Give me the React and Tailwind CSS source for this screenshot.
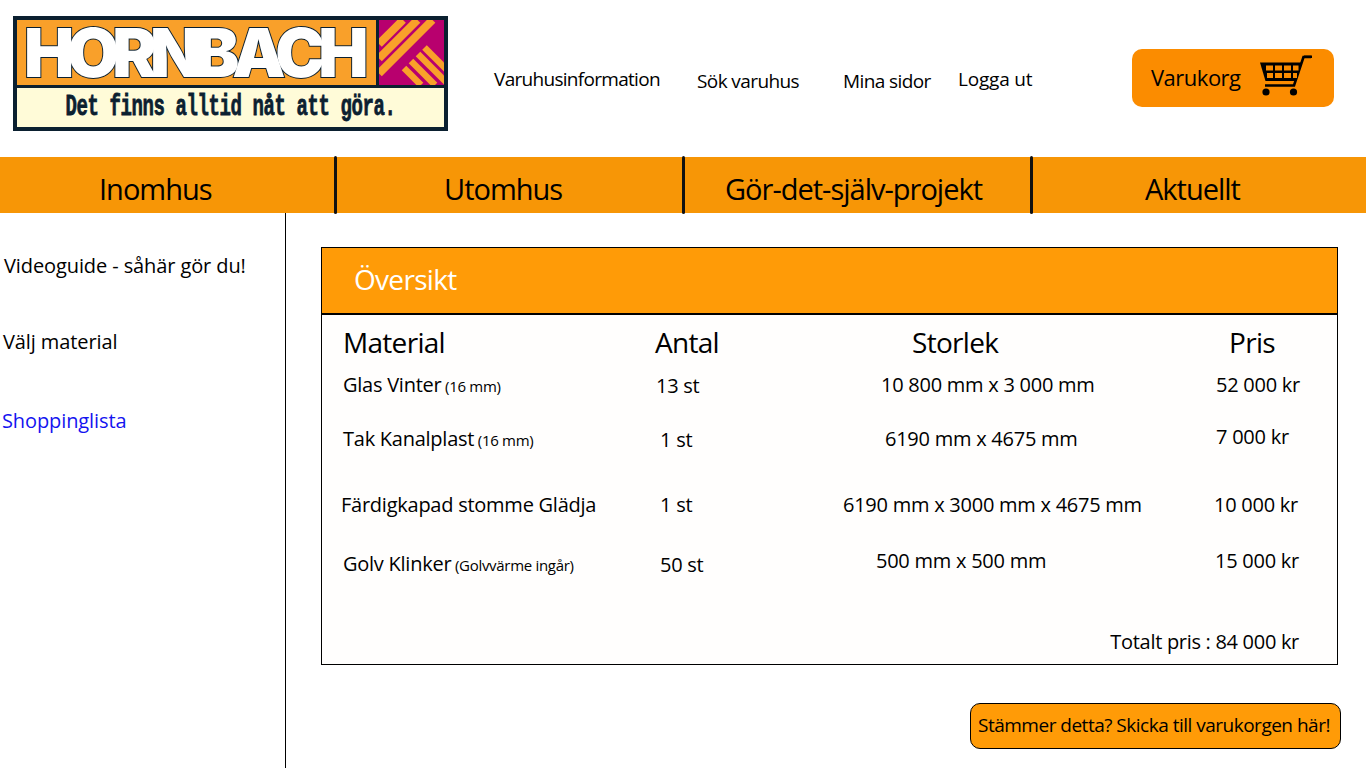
const navItems = [
  { label: 'Inomhus', className: 'w-[334px] pl-[99px]' },
  { label: 'Utomhus', className: 'w-[345px] pl-[107px]' },
  { label: 'Gör-det-själv-projekt', className: 'w-[345px] pl-[40px]' },
  { label: 'Aktuellt', className: 'flex-1 pl-[112px]' },
];

const headerLinks = [
  { label: 'Varuhusinformation', className: 'w-[203px] mt-[67px] tracking-[-0.7px]' },
  { label: 'Sök varuhus', className: 'w-[146px] mt-[69px] tracking-[-0.6px]' },
  { label: 'Mina sidor', className: 'w-[115px] mt-[69px] tracking-[-0.6px]' },
  { label: 'Logga ut', className: 'w-[174px] mt-[67px] tracking-[-0.2px]' },
];

const rows = [
  {
    height: 'h-[54px]',
    material: 'Glas Vinter',
    note: '(16 mm)',
    cells: ['pl-[21px]', 'pl-[16px] mt-[1px]', 'pl-[51px]', 'pl-[16px]'],
    antal: '13 st',
    storlek: '10 800 mm x 3 000 mm',
    pris: '52 000 kr',
  },
  {
    height: 'h-[66px]',
    material: 'Tak Kanalplast',
    note: '(16 mm)',
    cells: ['pl-[21px]', 'pl-[20px] mt-[1px]', 'pl-[55px]', 'pl-[16px] -mt-[2px]'],
    antal: '1 st',
    storlek: '6190 mm x 4675 mm',
    pris: '7 000 kr',
  },
  {
    height: 'h-[59px]',
    material: 'Färdigkapad stomme Glädja',
    cells: ['pl-[19px]', 'pl-[20px]', 'pl-[13px]', 'pl-[14px]'],
    antal: '1 st',
    storlek: '6190 mm x 3000 mm x 4675 mm',
    pris: '10 000 kr',
  },
  {
    height: 'h-[60px]',
    material: 'Golv Klinker',
    note: '(Golvvärme ingår)',
    cells: ['pl-[21px]', 'pl-[20px] mt-[1px]', 'pl-[46px] -mt-[3px]', 'pl-[15px] -mt-[3px]'],
    antal: '50 st',
    storlek: '500 mm x 500 mm',
    pris: '15 000 kr',
  },
];

const Logo = () => (
  <div className="w-[435px] h-[115px] mt-[16px] border-4 border-[#0b2030] flex flex-col">
    <div className="h-[65px] flex">
      <div className="flex-1 bg-[#f9a02a] border-r-[3px] border-[#0b2030] flex items-center pl-[7px]">
        <span className="font-['Inter',sans-serif] font-black text-[67px] leading-none tracking-[-7px] text-white [-webkit-text-stroke:2px_#0b2030] [paint-order:stroke_fill]">
          HORNBACH
        </span>
      </div>
      <svg viewBox="0 0 65 65" className="w-[65px] h-[65px]">
        <defs>
          <clipPath id="lowerRight">
            <polygon points="73,0 65,8 65,65 8,65" />
          </clipPath>
        </defs>
        <rect width="65" height="65" fill="#b8006e" />
        <g stroke="#f9a02a" strokeWidth="8">
          <line x1="24" y1="0" x2="0" y2="24" />
          <line x1="38.5" y1="0" x2="0" y2="38.5" />
          <line x1="53.5" y1="0" x2="0" y2="53.5" />
        </g>
        <g stroke="#f9a02a" strokeWidth="6.5" clipPath="url(#lowerRight)">
          <line x1="18" y1="0" x2="83" y2="65" />
          <line x1="5" y1="0" x2="70" y2="65" />
          <line x1="-9" y1="0" x2="56" y2="65" />
          <line x1="-23" y1="0" x2="42" y2="65" />
        </g>
      </svg>
    </div>
    <div className="flex-1 border-t-[3px] border-[#0b2030] bg-[#fffbd8] flex items-center justify-center">
      <span className="font-['Liberation_Mono',monospace] font-bold text-[19px] leading-none text-[#0b2030] scale-y-[1.6] tracking-[-0.4px] whitespace-nowrap [-webkit-text-stroke:0.5px_#0b2030]">
        Det finns alltid nåt att göra.
      </span>
    </div>
  </div>
);

const CartIcon = () => (
  <svg viewBox="0 0 70 52" className="w-[70px] h-[52px] mb-[4px]">
    <path d="M61 7H53.5L44 35.5H15" fill="none" stroke="#000" strokeWidth="2.6" />
    <path d="M10 12.5H52L45.5 31H15.5Z" fill="#000" />
    <g fill="#fb8c00">
      <rect x="16" y="15.5" width="7" height="5" />
      <rect x="25" y="15.5" width="7" height="5" />
      <rect x="34" y="15.5" width="7" height="5" />
      <rect x="43" y="15.5" width="5.5" height="5" />
      <rect x="17" y="23" width="6" height="5" />
      <rect x="25" y="23" width="7" height="5" />
      <rect x="34" y="23" width="7" height="5" />
      <rect x="43" y="23" width="4" height="5" />
    </g>
    <path d="M54 5.5H62V8H54Z" fill="#000" />
    <circle cx="16" cy="42" r="3.6" fill="#000" />
    <circle cx="43.5" cy="42" r="3.6" fill="#000" />
  </svg>
);

const App = () => {
  return (
    <div className="w-[1366px] h-[768px] overflow-hidden bg-white text-black font-['Open_Sans',sans-serif]">
      {/* Header */}
      <div className="h-[157px] flex pl-[13px]">
        <Logo />
        <div className="flex ml-[46px]">
          {headerLinks.map(link => (
            <a key={link.label} className={`${link.className} text-[19px] leading-[24px]`}>
              {link.label}
            </a>
          ))}
          <div className="w-[202px] h-[58px] mt-[49px] rounded-[10px] bg-[#fb8c00] flex items-center pl-[19px]">
            <span className="w-[99px] text-[22px] tracking-[-0.5px] -mt-[1px]">Varukorg</span>
            <CartIcon />
          </div>
        </div>
      </div>

      {/* Main nav */}
      <div className="h-[56px] bg-[#f79606] flex">
        {navItems.map((item, i) => (
          <div key={item.label} className="flex">
            <div className={`${item.className} pt-[12px] text-[29px] leading-[40px] tracking-[-1px] whitespace-nowrap`}>
              {item.label}
            </div>
            {i < 3 && <div className="w-[3px] h-[58px] -mt-[1px] rounded-full bg-[#111]"></div>}
          </div>
        ))}
      </div>

      <div className="flex h-[555px]">
        {/* Sidebar */}
        <div className="w-[286px] border-r border-black flex flex-col text-[20px] leading-[28px] tracking-[-0.1px]">
          <a className="mt-[39px] ml-[4px]">Videoguide - såhär gör du!</a>
          <a className="mt-[48px] ml-[3px]">Välj material</a>
          <a className="mt-[51px] ml-[2px] text-[#1414f0]">Shoppinglista</a>
        </div>

        {/* Overview */}
        <div className="flex-1 pl-[35px] pt-[34px]">
          <div className="w-[1017px] h-[418px] border border-black bg-[#fffefd] flex flex-col">
            <div className="h-[67px] shrink-0 bg-[#ff9b07] border-b-2 border-black pl-[32px] pb-[3px] flex items-center text-white text-[28px] tracking-[-0.7px]">
              Översikt
            </div>
            <div className="grid grid-cols-[318px_190px_370px_1fr] pt-[8px] text-[28px] leading-[38px] tracking-[-0.7px]">
              <div className="pl-[21px]">Material</div>
              <div className="pl-[15px]">Antal</div>
              <div className="pl-[82px]">Storlek</div>
              <div className="pl-[29px]">Pris</div>
            </div>
            <div className="mt-[11px] text-[20px] leading-[26px] tracking-[-0.25px]">
              {rows.map(row => (
                <div key={row.material} className={`${row.height} grid grid-cols-[318px_190px_370px_1fr] whitespace-nowrap`}>
                  <div className={row.cells[0]}>
                    {row.material}
                    {row.note && <span className="text-[15px] tracking-[-0.3px]"> {row.note}</span>}
                  </div>
                  <div className={row.cells[1]}>{row.antal}</div>
                  <div className={row.cells[2]}>{row.storlek}</div>
                  <div className={row.cells[3]}>{row.pris}</div>
                </div>
              ))}
            </div>
            <div className="flex-1 flex justify-end items-end pr-[38px] pb-[9px] text-[20px] leading-[26px] tracking-[-0.3px]">
              Totalt pris : 84 000 kr
            </div>
          </div>
          <div className="flex justify-end w-[1020px] mt-[38px]">
            <button className="w-[371px] h-[46px] rounded-[10px] border border-black bg-[#ff9b07] pr-[3px] pb-[2px] text-[19px] tracking-[-0.5px] whitespace-nowrap">
              Stämmer detta? Skicka till varukorgen här!
            </button>
          </div>
        </div>
      </div>
    </div>
  );
};

export default App;
